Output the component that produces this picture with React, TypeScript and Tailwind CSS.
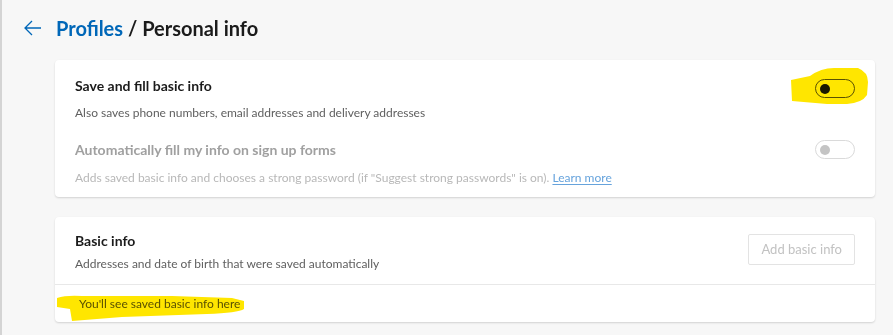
import React from 'react';

const Toggle = ({ disabled }: { disabled?: boolean }) => (
    <div
        className={`w-[40px] h-[19px] rounded-full border flex items-center px-[4px] ${disabled ? 'border-[#dadada]' : 'border-[#5a5a5a]'
            }`}
    >
        <div className={`w-[10px] h-[10px] rounded-full ${disabled ? 'bg-[#c4c4c4]' : 'bg-[#1a1a1a]'}`} />
    </div>
);

const App = () => {
    return (
        <div
            className="relative w-[893px] h-[335px] bg-[#f7f7f7] border-l-[2px] border-[#d4d4d4] overflow-hidden"
            style={{ fontFamily: '"Segoe UI", Lato, "Open Sans", sans-serif' }}
        >
            <div className="flex items-center h-[56px] pl-[22px]">
                <svg width="18" height="16" viewBox="0 0 18 16" className="text-[#0067b8]">
                    <path d="M8 1 L1 8 L8 15 M1 8 H17" fill="none" stroke="currentColor" strokeWidth="1.3" />
                </svg>
                <h1 className="ml-[14px] text-[20px] leading-none text-[#1b1b1b] font-bold">
                    <span className="text-[#0067b8]">Profiles</span>
                    <span> / Personal info</span>
                </h1>
            </div>

            <div className="ml-[53px] w-[820px] mt-[4px] flex flex-col gap-[20px]">
                <div className="bg-white rounded-[4px] shadow-[0_1px_2px_rgba(0,0,0,0.15)] px-[20px] pt-[16px] pb-[11px]">
                    <div className="flex items-start justify-between">
                        <div>
                            <div className="text-[14px] font-bold text-[#1b1b1b] leading-[20px]">Save and fill basic info</div>
                            <div className="text-[12px] text-[#5f5f5f] mt-[9px] leading-[16px]">
                                Also saves phone numbers, email addresses and delivery addresses
                            </div>
                        </div>
                        <div className="mt-[3px]">
                            <Toggle />
                        </div>
                    </div>
                    <div className="flex items-start justify-between mt-[19px]">
                        <div>
                            <div className="text-[14px] font-bold text-[#a0a0a0] leading-[20px]">
                                Automatically fill my info on sign up forms
                            </div>
                            <div className="text-[12px] text-[#b8b8b8] mt-[10px] leading-[16px]">
                                Adds saved basic info and chooses a strong password (if "Suggest strong passwords" is on).{' '}
                                <span className="text-[#66a3dc] underline underline-offset-2">Learn more</span>
                            </div>
                        </div>
                        <div>
                            <Toggle disabled />
                        </div>
                    </div>
                </div>

                <div className="bg-white rounded-[4px] shadow-[0_1px_2px_rgba(0,0,0,0.15)]">
                    <div className="flex items-center justify-between px-[20px] pt-[14px] pb-[12px] border-b border-[#e8e8e8]">
                        <div>
                            <div className="text-[14px] font-bold text-[#1b1b1b] leading-[20px]">Basic info</div>
                            <div className="text-[12px] text-[#5f5f5f] mt-[5px] leading-[16px]">
                                Addresses and date of birth that were saved automatically
                            </div>
                        </div>
                        <button className="h-[31px] px-[12px] mt-[-4px] border border-[#e3e3e3] rounded-[2px] text-[13px] text-[#c2c2c2]">
                            Add basic info
                        </button>
                    </div>
                    <div className="px-[24px] pt-[1px] h-[37px] flex items-center text-[12px] text-[#5a5a5a]">
                        You'll see saved basic info here
                    </div>
                </div>
            </div>

            {/* highlighter marks */}
            <svg className="absolute left-0 top-0 pointer-events-none mix-blend-multiply" width="893" height="335">
                <path
                    d="M789 80 L808 76 Q820 67 835 68 L856 68 Q866 72 866 82 L865 95 Q860 103 845 104 L825 104 L790 101 Z"
                    fill="#ffe600"
                />
                <path
                    d="M55 298 Q64 295 80 296 L170 296 L230 298 L242 301 L242 309 Q236 313 205 314 L120 317 L70 321 L68 309 L55 307 Z"
                    fill="#ffe600"
                />
            </svg>
        </div>
    );
};

export default App;
